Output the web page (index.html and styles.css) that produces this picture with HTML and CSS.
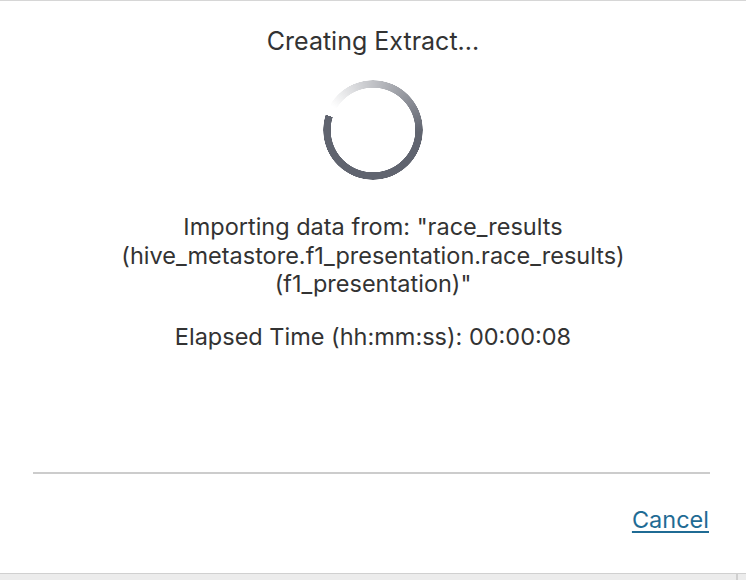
FILE: index.html
```html
<!DOCTYPE html>
<html>
<head>
<meta charset="utf-8">
<link rel="stylesheet" href="styles.css">
</head>
<body>
<div class="dialog">
  <div class="content">
    <h1 class="title">Creating Extract...</h1>
    <div class="spinner"></div>
    <p class="message">Importing data from: "race_results<br>(hive_metastore.f1_presentation.race_results)<br>(f1_presentation)"</p>
    <p class="elapsed">Elapsed Time (hh:mm:ss): 00:00:08</p>
  </div>
  <div class="footer">
    <a class="cancel" href="#">Cancel</a>
  </div>
  <div class="statusbar"><div class="statusbar-main"></div><div class="statusbar-side"></div></div>
</div>
</body>
</html>
```
FILE: styles.css
```css
html, body {
  margin: 0;
  padding: 0;
  background: #ffffff;
}
.dialog {
  width: 746px;
  height: 580px;
  box-sizing: border-box;
  border-top: 1px solid #d6d6d6;
  display: flex;
  flex-direction: column;
  font-family: Inter, Lato, sans-serif;
  color: #333333;
}
.content {
  flex: 1;
  display: flex;
  flex-direction: column;
  align-items: center;
}
.title {
  margin: 25px 0 0 0;
  font-size: 25px;
  font-weight: 400;
  line-height: 30px;
  color: #333333;
}
.spinner {
  margin-top: 24px;
  width: 100px;
  height: 100px;
  border-radius: 50%;
  background: conic-gradient(from 288deg, rgba(96,100,111,0) 0deg, rgba(96,100,111,0) 12deg, #60646f 165deg, #60646f 360deg);
  -webkit-mask: radial-gradient(circle, transparent 42px, #000 42.5px, #000 49.5px, transparent 50px);
  mask: radial-gradient(circle, transparent 42px, #000 42.5px, #000 49.5px, transparent 50px);
}
.message {
  margin: 33px 0 0 0;
  font-size: 23.5px;
  line-height: 28.5px;
  text-align: center;
}
.elapsed {
  margin: 24px 0 0 0;
  font-size: 23.5px;
  line-height: 28px;
  text-align: center;
}
.footer {
  margin: 0 36px 0 33px;
  border-top: 2px solid #cccccc;
  height: 101px;
  display: flex;
  justify-content: flex-end;
  align-items: flex-start;
  box-sizing: border-box;
}
.cancel {
  margin-top: 32px;
  margin-right: 1px;
  font-size: 23.5px;
  line-height: 28px;
  color: #1f6b94;
  text-decoration: underline;
  text-underline-offset: 3px;
}
.statusbar {
  height: 7px;
  border-top: 1px solid #d0d0d0;
  background: #ececec;
  display: flex;
  box-sizing: border-box;
}
.statusbar-main {
  width: 736px;
  border-right: 2px solid #d0d0d0;
}
.statusbar-side {
  flex: 1;
}
```
